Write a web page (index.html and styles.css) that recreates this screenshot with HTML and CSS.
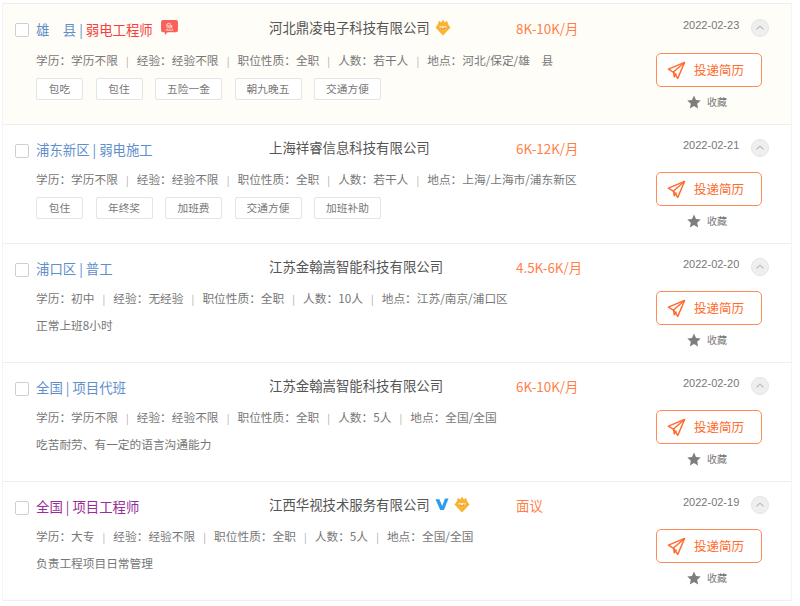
FILE: index.html
```html
<!DOCTYPE html>
<html lang="zh">
<head>
<meta charset="utf-8">
<title>职位列表</title>
<link rel="stylesheet" href="styles.css">
</head>
<body>
<svg class="defs" width="0" height="0" aria-hidden="true">
  <defs>
    <symbol id="plane" viewBox="0 0 20 20">
      <path d="M18.5 1.5 1.5 8.6l5 3 1.2 1.1 3.6 5.6z" fill="none" stroke="#ff6a2b" stroke-width="1.5" stroke-linejoin="round"/>
      <path d="M18.5 1.5 6.8 11.6l.9 5 2.3-3.4" fill="none" stroke="#ff6a2b" stroke-width="1.5" stroke-linejoin="round"/>
    </symbol>
    <symbol id="star" viewBox="0 0 14 14">
      <path d="M7 .6l2 4.3 4.7.6-3.5 3.2.9 4.7L7 11.1l-4.1 2.3.9-4.7L.3 5.5 5 4.9z" fill="#7d7d7d"/>
    </symbol>
    <symbol id="crown" viewBox="0 0 16 17">
      <path d="M2.5 6 4 1.8l2 1.6L8 .8l2 2.6 2-1.6L13.500 6 15.500 8.500 8 16.500 .5 8.500z" fill="#f9b233"/>
      <path d="M4 7.200h8L8 12z" fill="#fff3cf"/>
      <path d="M5.800 8.500 8 10.700l2.200-2.200" fill="none" stroke="#ee9412" stroke-width="1.300"/>
    </symbol>
  </defs>
</svg>

<main class="list">
  <article class="job job-hot">
    <span class="check"></span>
    <div class="main">
      <div class="head">
        <div class="title"><a class="place">雄&emsp;县 |</a> <a class="name-red">弱电工程师</a>
          <svg class="urgent" viewBox="0 0 18 16" aria-hidden="true"><path d="M2 0h14a2 2 0 0 1 2 2v9a2 2 0 0 1-2 2H7l-3 3v-3H2a2 2 0 0 1-2-2V2a2 2 0 0 1 2-2z" fill="#f9605a"/><text x="9" y="10.500" text-anchor="middle" class="urgent-text">急</text></svg>
        </div>
        <div class="company">河北鼎凌电子科技有限公司<svg class="badge"><use href="#crown"/></svg></div>
        <div class="salary">8K-10K/月</div>
      </div>
      <div class="meta">学历：学历不限<i>|</i>经验：经验不限<i>|</i>职位性质：全职<i>|</i>人数：若干人<i>|</i>地点：河北/保定/雄&emsp;县</div>
      <div class="tags"><span class="w-a">包吃</span><span class="w-a">包住</span><span class="w-b">五险一金</span><span class="w-b">朝九晚五</span><span class="w-b">交通方便</span></div>
    </div>
    <aside class="side">
      <div class="dateline"><time>2022-02-23</time><span class="fold"><svg viewBox="0 0 18 18" aria-hidden="true"><path d="M5 10.500 9 7l4 3.500" fill="none" stroke="#b5b5b5" stroke-width="1.200"/></svg></span></div>
      <button class="apply" type="button"><svg><use href="#plane"/></svg>投递简历</button>
      <div class="fav"><svg><use href="#star"/></svg>收藏</div>
    </aside>
  </article>

  <article class="job">
    <span class="check"></span>
    <div class="main">
      <div class="head">
        <div class="title"><a class="place">浦东新区 | 弱电施工</a></div>
        <div class="company">上海祥睿信息科技有限公司</div>
        <div class="salary">6K-12K/月</div>
      </div>
      <div class="meta">学历：学历不限<i>|</i>经验：经验不限<i>|</i>职位性质：全职<i>|</i>人数：若干人<i>|</i>地点：上海/上海市/浦东新区</div>
      <div class="tags"><span class="w-a">包住</span><span class="w-c">年终奖</span><span class="w-c">加班费</span><span class="w-b">交通方便</span><span class="w-b">加班补助</span></div>
    </div>
    <aside class="side">
      <div class="dateline"><time>2022-02-21</time><span class="fold"><svg viewBox="0 0 18 18" aria-hidden="true"><path d="M5 10.500 9 7l4 3.500" fill="none" stroke="#b5b5b5" stroke-width="1.200"/></svg></span></div>
      <button class="apply" type="button"><svg><use href="#plane"/></svg>投递简历</button>
      <div class="fav"><svg><use href="#star"/></svg>收藏</div>
    </aside>
  </article>

  <article class="job">
    <span class="check"></span>
    <div class="main">
      <div class="head">
        <div class="title"><a class="place">浦口区 | 普工</a></div>
        <div class="company">江苏金翰嵩智能科技有限公司</div>
        <div class="salary">4.5K-6K/月</div>
      </div>
      <div class="meta">学历：初中<i>|</i>经验：无经验<i>|</i>职位性质：全职<i>|</i>人数：10人<i>|</i>地点：江苏/南京/浦口区</div>
      <div class="desc">正常上班8小时</div>
    </div>
    <aside class="side">
      <div class="dateline"><time>2022-02-20</time><span class="fold"><svg viewBox="0 0 18 18" aria-hidden="true"><path d="M5 10.500 9 7l4 3.500" fill="none" stroke="#b5b5b5" stroke-width="1.200"/></svg></span></div>
      <button class="apply" type="button"><svg><use href="#plane"/></svg>投递简历</button>
      <div class="fav"><svg><use href="#star"/></svg>收藏</div>
    </aside>
  </article>

  <article class="job">
    <span class="check"></span>
    <div class="main">
      <div class="head">
        <div class="title"><a class="place">全国 | 项目代班</a></div>
        <div class="company">江苏金翰嵩智能科技有限公司</div>
        <div class="salary">6K-10K/月</div>
      </div>
      <div class="meta">学历：学历不限<i>|</i>经验：经验不限<i>|</i>职位性质：全职<i>|</i>人数：5人<i>|</i>地点：全国/全国</div>
      <div class="desc">吃苦耐劳、有一定的语言沟通能力</div>
    </div>
    <aside class="side">
      <div class="dateline"><time>2022-02-20</time><span class="fold"><svg viewBox="0 0 18 18" aria-hidden="true"><path d="M5 10.500 9 7l4 3.500" fill="none" stroke="#b5b5b5" stroke-width="1.200"/></svg></span></div>
      <button class="apply" type="button"><svg><use href="#plane"/></svg>投递简历</button>
      <div class="fav"><svg><use href="#star"/></svg>收藏</div>
    </aside>
  </article>

  <article class="job">
    <span class="check"></span>
    <div class="main">
      <div class="head">
        <div class="title"><a class="place-visited">全国 | 项目工程师</a></div>
        <div class="company">江西华视技术服务有限公司<svg class="vip" viewBox="0 0 15 13" aria-hidden="true"><path d="M.5 1h4.200l3 7 3-8h3.800L9.500 12.500H5.700z" fill="#2d9cf0"/></svg><svg class="badge"><use href="#crown"/></svg></div>
        <div class="salary">面议</div>
      </div>
      <div class="meta">学历：大专<i>|</i>经验：经验不限<i>|</i>职位性质：全职<i>|</i>人数：5人<i>|</i>地点：全国/全国</div>
      <div class="desc">负责工程项目日常管理</div>
    </div>
    <aside class="side">
      <div class="dateline"><time>2022-02-19</time><span class="fold"><svg viewBox="0 0 18 18" aria-hidden="true"><path d="M5 10.500 9 7l4 3.500" fill="none" stroke="#b5b5b5" stroke-width="1.200"/></svg></span></div>
      <button class="apply" type="button"><svg><use href="#plane"/></svg>投递简历</button>
      <div class="fav"><svg><use href="#star"/></svg>收藏</div>
    </aside>
  </article>
</main>
</body>
</html>
```

FILE: styles.css
```css
* { box-sizing: border-box; }

html, body { margin: 0; padding: 0; background: #fff; }

body {
  height: 606px;
  overflow: hidden;
  font-family: "Noto Sans CJK SC", "Liberation Sans", sans-serif;
  color: #666;
  padding: 3px 0 0 2px;
}

.defs { display: block; }

.list {
  width: 790px;
  border-top: 1px solid #eeeeee;
  border-left: 1px solid #f4f4f4;
  border-right: 1px solid #f4f4f4;
}

.job {
  display: flex;
  height: 119px;
  padding: 0 0 0 12px;
  border-bottom: 1px solid #eeeeee;
}

.job-hot {
  height: 121px;
  background: #fffdf8;
}

.check {
  flex: none;
  width: 14px;
  height: 14px;
  margin-top: 19px;
  border: 1px solid #cfcfcf;
  border-radius: 2px;
  background: #fff;
}

.main {
  flex: 1;
  min-width: 0;
  padding: 12px 0 0 7px;
}

.job-hot .main { padding-top: 13px; }

.head {
  display: flex;
  height: 20px;
  align-items: flex-start;
}

.title {
  width: 233px;
  flex: none;
  margin-top: 2px;
  font-size: 13.4px;
  line-height: 20px;
  white-space: nowrap;
  display: flex;
  align-items: center;
  gap: 3px;
}

.place { color: #5f8fcb; }
.name-red { color: #f5413c; }
.place-visited { color: #9a2c9a; }

.urgent {
  width: 17px;
  height: 15px;
  margin: -4px 0 0 5px;
}

.urgent-text {
  font-size: 9px;
  fill: #ffe3df;
}

.company {
  width: 247px;
  flex: none;
  font-size: 13.4px;
  line-height: 20px;
  color: #555;
  display: flex;
  align-items: center;
  gap: 5px;
  white-space: nowrap;
}

.badge { width: 16px; height: 17px; }
.vip { width: 14px; height: 13px; }

.salary {
  margin-top: 1px;
  font-size: 13.4px;
  line-height: 20px;
  color: #ff7f4a;
  white-space: nowrap;
}

.meta {
  margin-top: 14px;
  font-size: 11.700px;
  line-height: 16px;
  color: #777;
  white-space: nowrap;
}

.job-hot .meta { margin-top: 15px; }

.meta i {
  font-style: normal;
  margin: 0 8.100px;
  color: #aaa;
  font-size: 10px;
}

.tags {
  display: flex;
  gap: 12.500px;
  margin-top: 9px;
}

.tags span {
  height: 22px;
  line-height: 20px;
  text-align: center;
  font-size: 10.700px;
  color: #777;
  background: #fff;
  border: 1px solid #e4e4e4;
  border-radius: 2px;
}

.w-a { width: 47px; }
.w-b { width: 67px; }
.w-c { width: 57px; }

.desc {
  margin-top: 10px;
  font-size: 11.700px;
  line-height: 16px;
  color: #777;
}

.side {
  flex: none;
  width: 136px;
  display: flex;
  flex-direction: column;
  padding-top: 12px;
}

.job-hot .side { padding-top: 13px; }

.dateline {
  display: flex;
  align-items: flex-start;
  height: 18px;
  padding-left: 28px;
  gap: 13px;
}

.dateline time {
  font-size: 11px;
  line-height: 16px;
  color: #777;
  width: 55px;
  font-family: "Liberation Sans", sans-serif;
  white-space: nowrap;
}

.fold {
  width: 18px;
  height: 18px;
  margin-top: 2px;
  border-radius: 50%;
  background: #efefef;
  border: 1px solid #e4e4e4;
  display: flex;
}

.fold svg { width: 16px; height: 16px; }

.apply {
  display: flex;
  align-items: center;
  width: 106px;
  height: 34px;
  margin: 17px 0 0 1px;
  padding: 0 0 0 10px;
  gap: 8px;
  font: 12.500px/1 "Noto Sans CJK SC", sans-serif;
  color: #ff6a2b;
  background: #fff;
  border: 1px solid #ff8a55;
  border-radius: 5px;
}

.job-hot .apply { margin-top: 18px; }

.apply svg { width: 19px; height: 19px; flex: none; }

.fav {
  display: flex;
  align-items: center;
  gap: 6px;
  margin: 8px 0 0 32px;
  font-size: 10px;
  line-height: 14px;
  color: #777;
}

.fav svg { width: 14px; height: 14px; }
```
